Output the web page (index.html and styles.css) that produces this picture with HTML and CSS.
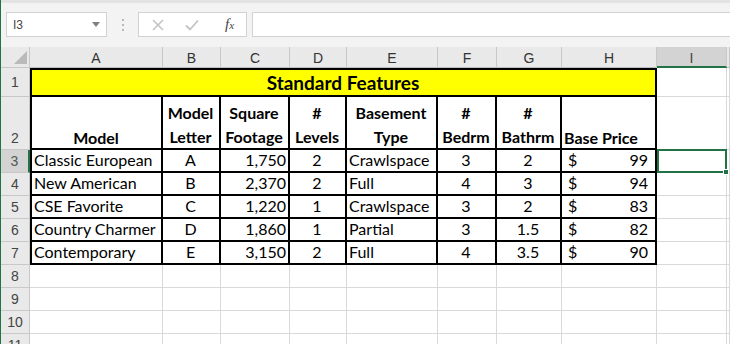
FILE: index.html
```html
<!DOCTYPE html>
<html>
<head>
<meta charset="utf-8">
<link rel="stylesheet" href="styles.css">
</head>
<body>
<div class="app">
  <div class="topstrip"></div>
  <div class="fbar">
    <div class="namebox"><span class="ref">I3</span><span class="caret"></span></div>
    <div class="sep"><i></i><i></i><i></i></div>
    <div class="fbtns">
      <svg class="ico" width="14" height="14" viewBox="0 0 14 14"><path d="M2 2 L12 12 M12 2 L2 12" stroke="#c4c4c4" stroke-width="1.6" fill="none"/></svg>
      <svg class="ico" width="16" height="14" viewBox="0 0 16 14"><path d="M2 7.5 L6 11.5 L14 2.5" stroke="#c4c4c4" stroke-width="1.8" fill="none"/></svg>
      <span class="fx">f<span class="fxs">x</span></span>
    </div>
    <div class="finput"></div>
  </div>
  <div class="sheet">
    <!-- header row -->
    <div class="corner"><span class="tri"></span></div>
    <div class="ch">A</div><div class="ch">B</div><div class="ch">C</div><div class="ch">D</div><div class="ch">E</div><div class="ch">F</div><div class="ch">G</div><div class="ch">H</div><div class="ch sel">I</div><div class="ch"></div>

    <!-- row 1 -->
    <div class="rh">1</div>
    <div class="t tl tt title">Standard Features</div>
    <div class="c"></div><div class="c"></div>

    <!-- row 2 -->
    <div class="rh tall">2</div>
    <div class="t tl hd one ctr">Model</div>
    <div class="t hd ctr">Model<br>Letter</div>
    <div class="t hd ctr">Square<br>Footage</div>
    <div class="t hd ctr">#<br>Levels</div>
    <div class="t hd ctr">Basement<br>Type</div>
    <div class="t hd ctr">#<br>Bedrm</div>
    <div class="t hd ctr">#<br>Bathrm</div>
    <div class="t hd one lft">Base Price</div>
    <div class="c"></div><div class="c"></div>

    <!-- row 3 -->
    <div class="rh rsel">3</div>
    <div class="t tl lft">Classic European</div>
    <div class="t ctr">A</div>
    <div class="t rgt">1,750</div>
    <div class="t ctr">2</div>
    <div class="t lft">Crawlspace</div>
    <div class="t ctr">3</div>
    <div class="t ctr">2</div>
    <div class="t acc"><span>$</span><span>99</span></div>
    <div class="c active"><span class="handle"></span></div><div class="c"></div>

    <!-- row 4 -->
    <div class="rh">4</div>
    <div class="t tl lft">New American</div>
    <div class="t ctr">B</div>
    <div class="t rgt">2,370</div>
    <div class="t ctr">2</div>
    <div class="t lft">Full</div>
    <div class="t ctr">4</div>
    <div class="t ctr">3</div>
    <div class="t acc"><span>$</span><span>94</span></div>
    <div class="c"></div><div class="c"></div>

    <!-- row 5 -->
    <div class="rh">5</div>
    <div class="t tl lft">CSE Favorite</div>
    <div class="t ctr">C</div>
    <div class="t rgt">1,220</div>
    <div class="t ctr">1</div>
    <div class="t lft">Crawlspace</div>
    <div class="t ctr">3</div>
    <div class="t ctr">2</div>
    <div class="t acc"><span>$</span><span>83</span></div>
    <div class="c"></div><div class="c"></div>

    <!-- row 6 -->
    <div class="rh">6</div>
    <div class="t tl lft">Country Charmer</div>
    <div class="t ctr">D</div>
    <div class="t rgt">1,860</div>
    <div class="t ctr">1</div>
    <div class="t lft">Partial</div>
    <div class="t ctr">3</div>
    <div class="t ctr">1.5</div>
    <div class="t acc"><span>$</span><span>82</span></div>
    <div class="c"></div><div class="c"></div>

    <!-- row 7 -->
    <div class="rh">7</div>
    <div class="t tl lft">Contemporary</div>
    <div class="t ctr">E</div>
    <div class="t rgt">3,150</div>
    <div class="t ctr">2</div>
    <div class="t lft">Full</div>
    <div class="t ctr">4</div>
    <div class="t ctr">3.5</div>
    <div class="t acc"><span>$</span><span>90</span></div>
    <div class="c"></div><div class="c"></div>

    <!-- rows 8-11 -->
    <div class="rh">8</div>
    <div class="c"></div><div class="c"></div><div class="c"></div><div class="c"></div><div class="c"></div><div class="c"></div><div class="c"></div><div class="c"></div><div class="c"></div><div class="c"></div>
    <div class="rh">9</div>
    <div class="c"></div><div class="c"></div><div class="c"></div><div class="c"></div><div class="c"></div><div class="c"></div><div class="c"></div><div class="c"></div><div class="c"></div><div class="c"></div>
    <div class="rh">10</div>
    <div class="c"></div><div class="c"></div><div class="c"></div><div class="c"></div><div class="c"></div><div class="c"></div><div class="c"></div><div class="c"></div><div class="c"></div><div class="c"></div>
    <div class="rh">11</div>
    <div class="c"></div><div class="c"></div><div class="c"></div><div class="c"></div><div class="c"></div><div class="c"></div><div class="c"></div><div class="c"></div><div class="c"></div><div class="c"></div>
  </div>
</div>
</body>
</html>
```

FILE: styles.css
```css
* { box-sizing: border-box; }
html, body { margin: 0; padding: 0; background: #fff; }
body { width: 730px; height: 344px; overflow: hidden; font-family: "Lato", "Liberation Sans", sans-serif; }

.app { border-left: 1px solid #217346; height: 344px; overflow: hidden; }

.topstrip { height: 3px; background: #e3e3e3; }
.fbar {
  height: 44px;
  background: #f3f3f3;
  display: flex;
  align-items: flex-start;
  padding: 9px 0 0 5px;
}
.namebox {
  width: 101px; height: 25px;
  background: #fff;
  border: 1px solid #d2d2d2;
  display: flex; align-items: center; justify-content: space-between;
  padding: 0 6px 0 6px;
}
.ref { font-family: "Liberation Sans", sans-serif; font-size: 12px; color: #444; }
.caret {
  width: 0; height: 0;
  border-left: 4px solid transparent;
  border-right: 4px solid transparent;
  border-top: 5px solid #808080;
}
.sep {
  width: 31px; height: 25px;
  display: flex; flex-direction: column; align-items: center; justify-content: center; gap: 3px;
}
.sep i { display: block; width: 2px; height: 2px; background: #b8b8b8; }
.fbtns {
  width: 109px; height: 25px;
  background: #fff;
  border: 1px solid #d2d2d2;
  display: flex; align-items: center;
  padding-left: 12px;
  gap: 19px;
}
.ico { display: block; }
.fx {
  font-family: "Liberation Serif", serif; font-style: italic;
  font-size: 15px; color: #444; margin-left: 6px;
}
.fxs { font-size: 11px; }
.finput {
  flex: 1; height: 25px; margin-left: 5px; margin-right: -2px;
  background: #fff; border: 1px solid #d2d2d2;
}

.sheet {
  display: grid;
  grid-template-columns: 29px 133px 58px 69px 57px 91px 59px 65px 95px 70px 1fr;
  grid-template-rows: 21px 29px 53px repeat(9, 23px);
}
.corner {
  background: #e9e9e9;
  border-right: 1px solid #c8c8c8;
  border-bottom: 1px solid #c8c8c8;
  display: flex; align-items: flex-end; justify-content: flex-end;
  padding: 0 2px 3px 0;
}
.tri {
  width: 0; height: 0;
  border-bottom: 13px solid #bababa;
  border-left: 13px solid transparent;
}
.ch {
  background: #e9e9e9;
  border-right: 1px solid #c8c8c8;
  border-bottom: 1px solid #bdbdbd;
  font-family: "Liberation Sans", sans-serif;
  font-size: 14px; color: #333;
  display: flex; align-items: center; justify-content: center;
  padding-top: 2px;
}
.ch.sel { background: #d3d3d3; border-bottom: 2px solid #217346; color: #444; }
.rh {
  background: #e9e9e9;
  border-right: 1px solid #c8c8c8;
  border-bottom: 1px solid #c8c8c8;
  font-family: "Liberation Sans", sans-serif;
  font-size: 14px; color: #444;
  display: flex; align-items: center; justify-content: center;
}
.rh.tall { align-items: flex-end; padding-bottom: 3px; }
.rh.rsel { background: #d3d3d3; border-right: 2px solid #217346; color: #555; }

.c {
  border-right: 1px solid #d9d9d9;
  border-bottom: 1px solid #d9d9d9;
}
.c.active { border: 2px solid #217346; position: relative; margin: -1px 0 0 0; }
.handle {
  position: absolute; right: -4px; bottom: -4px;
  width: 6px; height: 6px; background: #217346; border: 1px solid #fff;
}

.t {
  border-right: 2px solid #000;
  border-bottom: 2px solid #000;
  font-size: 16px; color: #000;
  display: flex; align-items: flex-end;
  padding: 0 3px 2px 2px;
  white-space: nowrap;
  line-height: 19px;
}
.tl { border-left: 2px solid #000; }
.tt { border-top: 2px solid #000; }
.title {
  grid-column: span 8;
  background: #ffff00;
  font-weight: bold;
  font-size: 19px;
  justify-content: center;
  padding-bottom: 3px;
}
.hd { font-weight: bold; line-height: 24px; padding-top: 4px; padding-bottom: 0; align-items: flex-start; text-align: center; }
.hd.one { padding-top: 29px; }
.ctr { justify-content: center; text-align: center; }
.lft { justify-content: flex-start; }
.rgt { justify-content: flex-end; padding-right: 2px; }
.acc { justify-content: space-between; padding: 0 7px 2px 6px; }
```
